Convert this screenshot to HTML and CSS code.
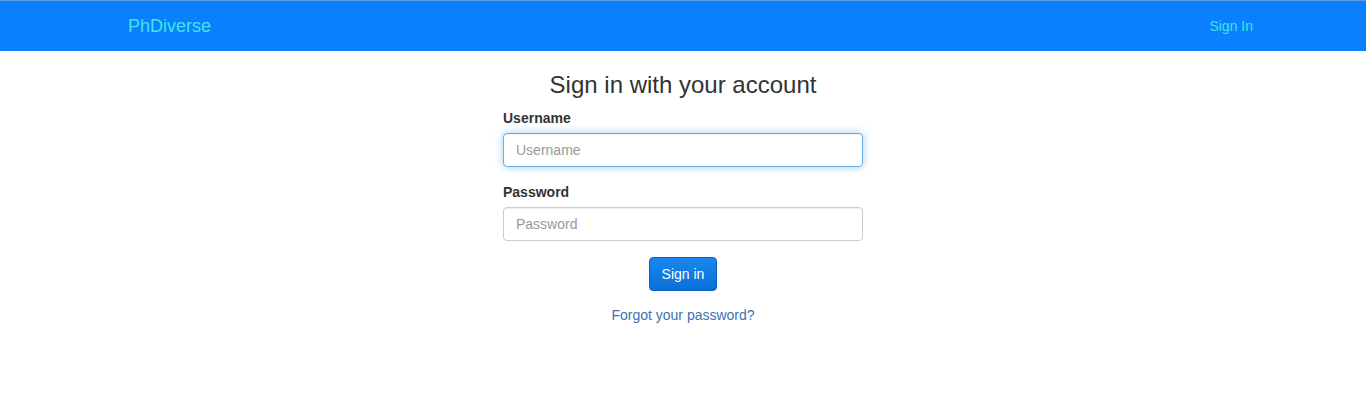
FILE: index.html
```html
<!DOCTYPE html>
<html>
<head>
<meta charset="utf-8">
<title>PhDiverse</title>
<link rel="stylesheet" href="styles.css">
</head>
<body>
<nav class="navbar">
  <div class="container nav-inner">
    <a class="brand" href="#">PhDiverse</a>
    <a class="nav-link" href="#">Sign In</a>
  </div>
</nav>
<main class="container">
  <form class="signin">
    <h2 class="heading">Sign in with your account</h2>
    <div class="group">
      <label class="label" for="u">Username</label>
      <input id="u" class="field focused" type="text" placeholder="Username" autofocus>
    </div>
    <div class="group">
      <label class="label" for="p">Password</label>
      <input id="p" class="field" type="password" placeholder="Password">
    </div>
    <div class="actions">
      <button class="btn" type="button">Sign in</button>
    </div>
    <a class="forgot" href="#">Forgot your password?</a>
  </form>
</main>
</body>
</html>
```
FILE: styles.css
```css
* { box-sizing: border-box; }
html, body { margin: 0; padding: 0; }
body {
  font-family: "Liberation Sans", Arial, Helvetica, sans-serif;
  font-size: 14px;
  line-height: 20px;
  color: #333;
  background: #fff;
}
.container {
  width: 1170px;
  margin: 0 auto;
  padding: 0 15px;
}
.navbar {
  height: 51px;
  background: #0a80ff;
  border-top: 1px solid #5b9ae0;
}
.nav-inner {
  display: flex;
  justify-content: space-between;
  align-items: center;
  height: 50px;
}
.brand {
  padding: 15px;
  font-size: 18px;
  line-height: 20px;
  color: #3ee4ea;
  text-decoration: none;
}
.nav-link {
  padding: 15px;
  margin-right: -15px;
  font-size: 14px;
  line-height: 20px;
  color: #3ee4ea;
  text-decoration: none;
}
.signin {
  width: 360px;
  margin: 0 auto;
  display: flex;
  flex-direction: column;
}
.heading {
  margin: 21px 0 10px;
  font-size: 24px;
  line-height: 26px;
  font-weight: 500;
  text-align: center;
  color: #333;
}
.group {
  display: flex;
  flex-direction: column;
  margin-bottom: 15px;
}
.label {
  font-weight: bold;
  margin-bottom: 5px;
}
.field {
  height: 34px;
  padding: 6px 12px;
  font-family: inherit;
  font-size: 14px;
  color: #555;
  border: 1px solid #ccc;
  border-radius: 4px;
  box-shadow: inset 0 1px 1px rgba(0,0,0,.075);
  outline: none;
}
.field::placeholder { color: #999; }
.field.focused, .field:focus {
  border-color: #66afe9;
  box-shadow: inset 0 1px 1px rgba(0,0,0,.075), 0 0 8px rgba(102,175,233,.6);
}
.actions {
  display: flex;
  justify-content: center;
  margin-top: 1px;
  margin-bottom: 14px;
}
.btn {
  height: 34px;
  padding: 6px 12px;
  font-family: inherit;
  font-size: 14px;
  line-height: 20px;
  color: #fff;
  background: linear-gradient(#1a87ee, #0b6fd9);
  border: 1px solid #0a5fbd;
  border-radius: 4px;
}
.forgot {
  align-self: center;
  color: #3a74b0;
  text-decoration: none;
}
```
